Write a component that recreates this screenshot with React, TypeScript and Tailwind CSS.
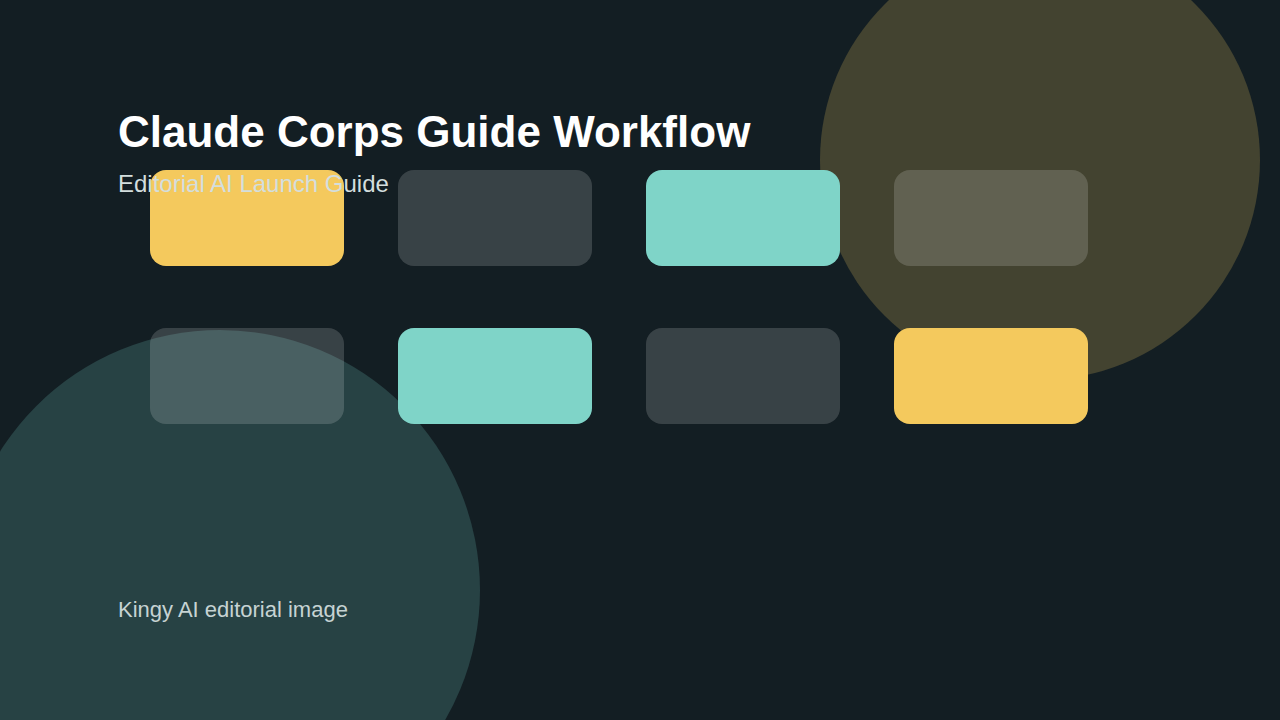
export default function App() {
  const cards = [
    "bg-[#f4c95d]",
    "bg-white/[0.16]",
    "bg-[#7fd4c8]",
    "bg-white/[0.16]",
    "bg-white/[0.16]",
    "bg-[#7fd4c8]",
    "bg-white/[0.16]",
    "bg-[#f4c95d]",
  ];
  return (
    <div
      className="relative h-[720px] w-[1280px] overflow-hidden bg-[#131e23]"
      style={{ fontFamily: '"Liberation Sans", Arial, sans-serif' }}
    >
      {/* decorative circles */}
      <div className="absolute left-[820px] top-[-60px] h-[440px] w-[440px] rounded-full bg-[#434330]" />
      <div className="absolute left-[-40px] top-[330px] h-[520px] w-[520px] rounded-full bg-[#274244]" />

      <div className="relative grid grid-cols-[repeat(4,194px)] gap-x-[54px] gap-y-[62px] pl-[150px] pt-[170px]">
        {cards.map((c, i) => (
          <div key={i} className={`h-[96px] w-[194px] rounded-2xl ${c}`} />
        ))}
      </div>

      <div className="absolute left-[118px] top-[106px]">
        <h1 className="text-[44px] font-bold leading-[52px] text-white">Claude Corps Guide Workflow</h1>
        <p className="mt-[12px] text-[24px] leading-[28px] text-[#d3dede]">Editorial AI Launch Guide</p>
      </div>

      <p className="absolute left-[118px] top-[597px] text-[22px] leading-[26px] text-[#c6d3d3]">
        Kingy AI editorial image
      </p>
    </div>
  );
}
